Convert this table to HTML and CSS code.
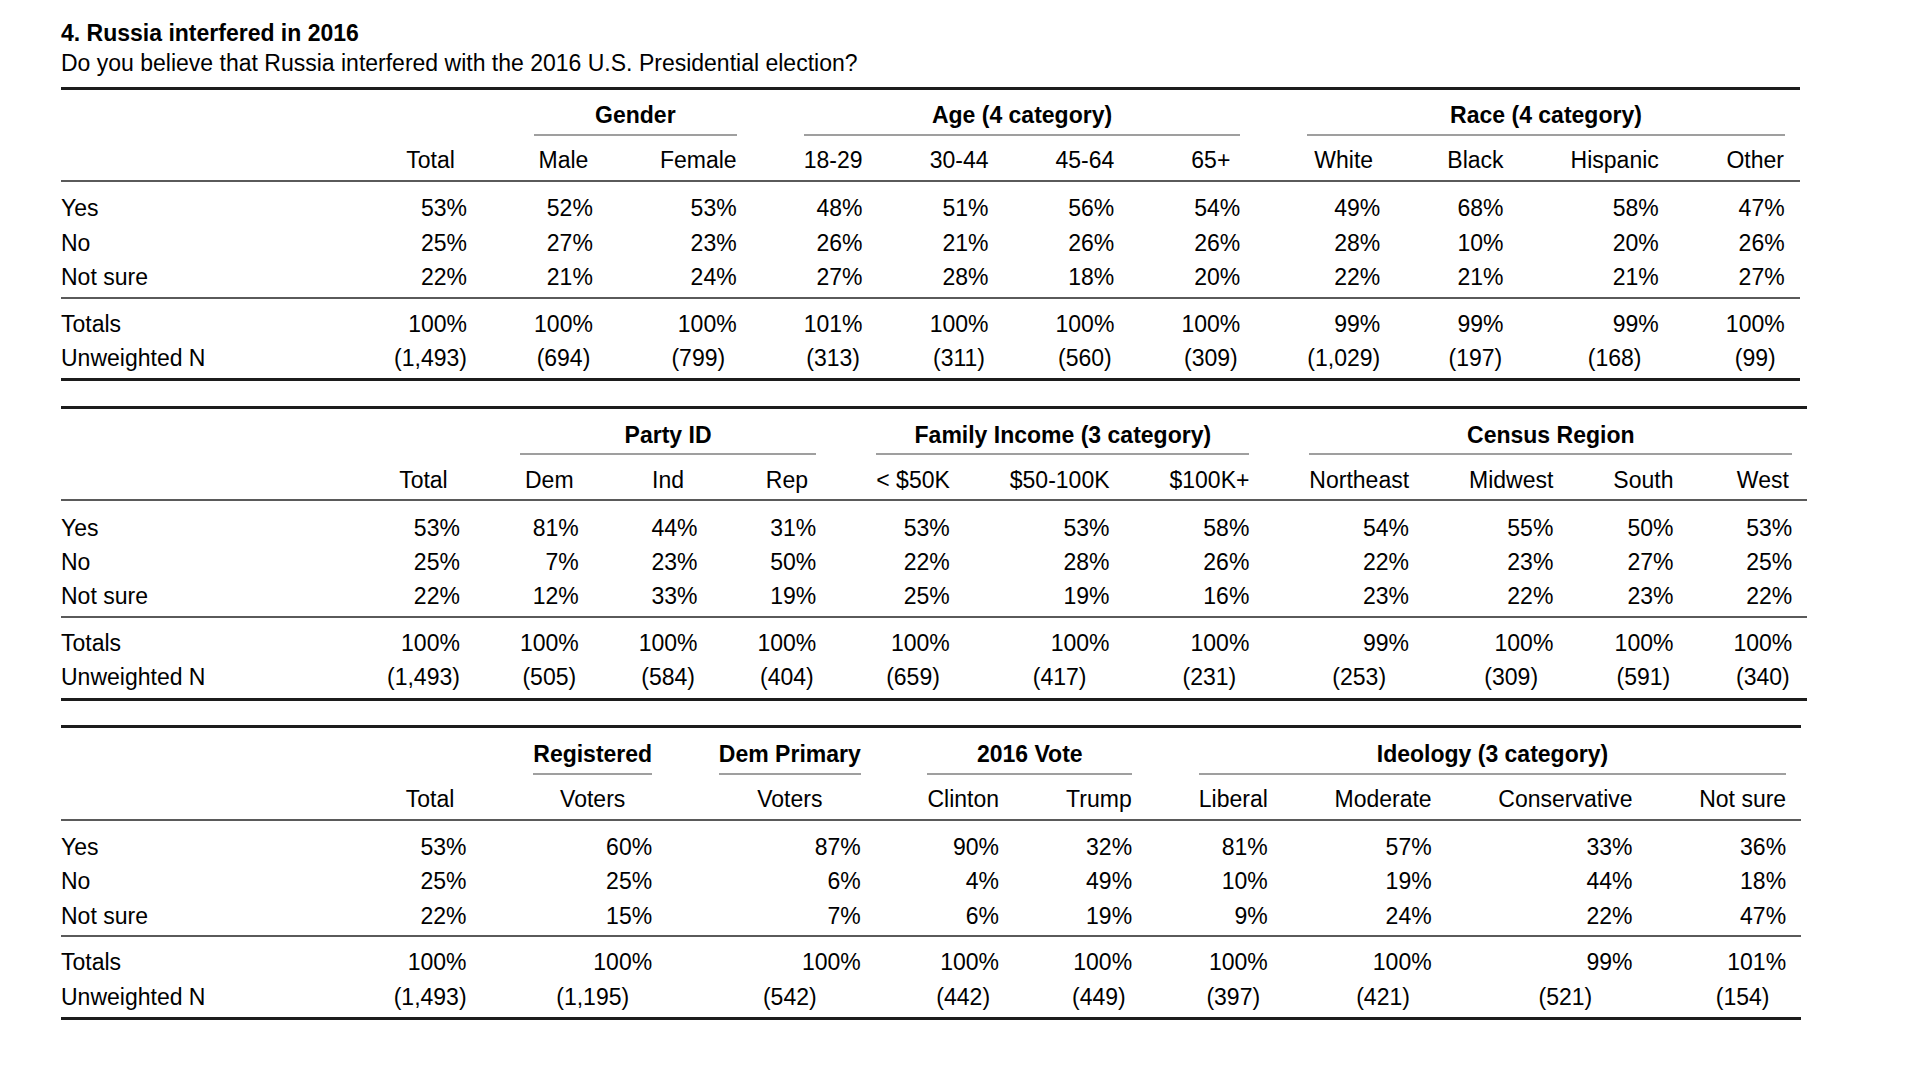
FILE: index.html
```html
<!DOCTYPE html>
<html lang="en">
<head>
<meta charset="utf-8">
<title>4. Russia interfered in 2016</title>
<link rel="stylesheet" href="styles.css">
</head>
<body>
<div class="page">
  <div class="title">4. Russia interfered in 2016</div>
  <div class="subtitle">Do you believe that Russia interfered with the 2016 U.S. Presidential election?</div>

  <div class="xtab t1">
    <div class="row groups">
      <div></div><div></div>
      <div class="g s2">Gender</div>
      <div class="g s4">Age (4 category)</div>
      <div class="g s4">Race (4 category)</div>
    </div>
    <div class="row heads">
      <div></div><div>Total</div><div>Male</div><div>Female</div><div>18-29</div><div>30-44</div><div>45-64</div><div>65+</div><div>White</div><div>Black</div><div>Hispanic</div><div>Other</div>
    </div>
    <div class="block body">
      <div class="row"><div>Yes</div><div>53%</div><div>52%</div><div>53%</div><div>48%</div><div>51%</div><div>56%</div><div>54%</div><div>49%</div><div>68%</div><div>58%</div><div>47%</div></div>
      <div class="row"><div>No</div><div>25%</div><div>27%</div><div>23%</div><div>26%</div><div>21%</div><div>26%</div><div>26%</div><div>28%</div><div>10%</div><div>20%</div><div>26%</div></div>
      <div class="row"><div>Not sure</div><div>22%</div><div>21%</div><div>24%</div><div>27%</div><div>28%</div><div>18%</div><div>20%</div><div>22%</div><div>21%</div><div>21%</div><div>27%</div></div>
    </div>
    <div class="block totals">
      <div class="row"><div>Totals</div><div>100%</div><div>100%</div><div>100%</div><div>101%</div><div>100%</div><div>100%</div><div>100%</div><div>99%</div><div>99%</div><div>99%</div><div>100%</div></div>
      <div class="row n"><div>Unweighted N</div><div>(1,493)</div><div>(694)</div><div>(799)</div><div>(313)</div><div>(311)</div><div>(560)</div><div>(309)</div><div>(1,029)</div><div>(197)</div><div>(168)</div><div>(99)</div></div>
    </div>
  </div>

  <div class="xtab t2">
    <div class="row groups">
      <div></div><div></div>
      <div class="g s3">Party ID</div>
      <div class="g s3">Family Income (3 category)</div>
      <div class="g s4">Census Region</div>
    </div>
    <div class="row heads">
      <div></div><div>Total</div><div>Dem</div><div>Ind</div><div>Rep</div><div>&lt; $50K</div><div>$50-100K</div><div>$100K+</div><div>Northeast</div><div>Midwest</div><div>South</div><div>West</div>
    </div>
    <div class="block body">
      <div class="row"><div>Yes</div><div>53%</div><div>81%</div><div>44%</div><div>31%</div><div>53%</div><div>53%</div><div>58%</div><div>54%</div><div>55%</div><div>50%</div><div>53%</div></div>
      <div class="row"><div>No</div><div>25%</div><div>7%</div><div>23%</div><div>50%</div><div>22%</div><div>28%</div><div>26%</div><div>22%</div><div>23%</div><div>27%</div><div>25%</div></div>
      <div class="row"><div>Not sure</div><div>22%</div><div>12%</div><div>33%</div><div>19%</div><div>25%</div><div>19%</div><div>16%</div><div>23%</div><div>22%</div><div>23%</div><div>22%</div></div>
    </div>
    <div class="block totals">
      <div class="row"><div>Totals</div><div>100%</div><div>100%</div><div>100%</div><div>100%</div><div>100%</div><div>100%</div><div>100%</div><div>99%</div><div>100%</div><div>100%</div><div>100%</div></div>
      <div class="row n"><div>Unweighted N</div><div>(1,493)</div><div>(505)</div><div>(584)</div><div>(404)</div><div>(659)</div><div>(417)</div><div>(231)</div><div>(253)</div><div>(309)</div><div>(591)</div><div>(340)</div></div>
    </div>
  </div>

  <div class="xtab t3">
    <div class="row groups">
      <div></div><div></div>
      <div class="g">Registered</div>
      <div class="g">Dem Primary</div>
      <div class="g s2">2016 Vote</div>
      <div class="g s4">Ideology (3 category)</div>
    </div>
    <div class="row heads">
      <div></div><div>Total</div><div>Voters</div><div>Voters</div><div>Clinton</div><div>Trump</div><div>Liberal</div><div>Moderate</div><div>Conservative</div><div>Not sure</div>
    </div>
    <div class="block body">
      <div class="row"><div>Yes</div><div>53%</div><div>60%</div><div>87%</div><div>90%</div><div>32%</div><div>81%</div><div>57%</div><div>33%</div><div>36%</div></div>
      <div class="row"><div>No</div><div>25%</div><div>25%</div><div>6%</div><div>4%</div><div>49%</div><div>10%</div><div>19%</div><div>44%</div><div>18%</div></div>
      <div class="row"><div>Not sure</div><div>22%</div><div>15%</div><div>7%</div><div>6%</div><div>19%</div><div>9%</div><div>24%</div><div>22%</div><div>47%</div></div>
    </div>
    <div class="block totals">
      <div class="row"><div>Totals</div><div>100%</div><div>100%</div><div>100%</div><div>100%</div><div>100%</div><div>100%</div><div>100%</div><div>99%</div><div>101%</div></div>
      <div class="row n"><div>Unweighted N</div><div>(1,493)</div><div>(1,195)</div><div>(542)</div><div>(442)</div><div>(449)</div><div>(397)</div><div>(421)</div><div>(521)</div><div>(154)</div></div>
    </div>
  </div>
</div>
</body>
</html>
```

FILE: styles.css
```css
* { box-sizing: border-box; }

html, body {
  margin: 0;
  padding: 0;
  background: #ffffff;
}

body {
  font-family: "Liberation Sans", Arial, Helvetica, sans-serif;
  font-size: 23px;
  color: #000000;
}

.page {
  padding: 18px 0 0 61px;
}

.title {
  font-weight: bold;
  line-height: 30px;
}

.subtitle {
  line-height: 30px;
}

.xtab {
  width: max-content;
  border-top: 3px solid #1c1c1c;
  border-bottom: 3px solid #1c1c1c;
  margin-top: 8.7px;
}

.xtab + .xtab {
  margin-top: 24.6px;
}

.row {
  display: grid;
  padding-right: 15px;
  line-height: 34.4px;
}

.t1 .row {
  grid-template-columns: 266px 72.9px 58.8px 76.7px 58.8px 58.8px 58.8px 58.8px 72.9px 56.2px 88.2px 58.8px;
  column-gap: 67.1px;
}

.t2 .row {
  grid-template-columns: 266px 72.9px 58.8px 58.8px 58.8px 73.5px 99.7px 79.9px 99.7px 84.3px 60.1px 58.8px;
  column-gap: 60px;
}

.t3 .row {
  grid-template-columns: 266px 72.9px 118.9px 141.9px 71.6px 66.4px 69px 97.2px 134.2px 86.9px;
  column-gap: 66.7px;
}

.row > div {
  text-align: right;
  white-space: nowrap;
}

.row > div:first-child {
  text-align: left;
}

.groups {
  padding-top: 10.8px;
  line-height: 30px;
}

.groups > .g {
  font-weight: bold;
  text-align: center;
  padding-bottom: 3.7px;
  border-bottom: 2px solid #9f9f9f;
}

.s2 { grid-column: span 2; }
.s3 { grid-column: span 3; }
.s4 { grid-column: span 4; }

.heads {
  line-height: 30px;
  padding-top: 9.3px;
  padding-bottom: 4.7px;
  border-bottom: 2px solid #5a5a5a;
}

.heads > div {
  text-align: center;
}

.body {
  padding-top: 9.1px;
  padding-bottom: 2.2px;
  border-bottom: 2px solid #5a5a5a;
}

.totals {
  padding-top: 8.1px;
  padding-bottom: 2.8px;
}

.row.n > div {
  text-align: center;
}

.row.n > div:first-child {
  text-align: left;
}
```
